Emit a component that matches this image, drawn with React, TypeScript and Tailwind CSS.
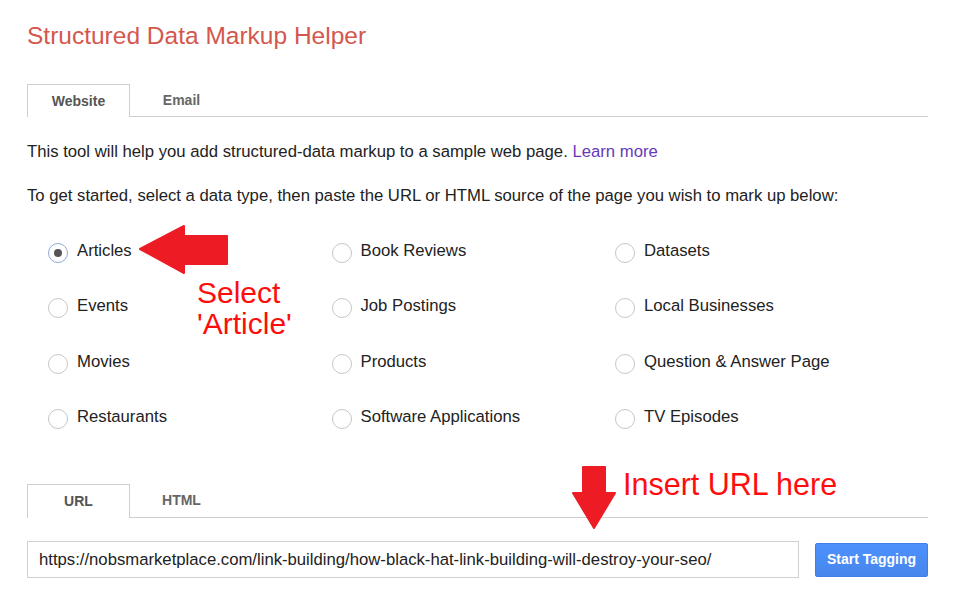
import React from 'react';

const types = [
  'Articles',
  'Book Reviews',
  'Datasets',
  'Events',
  'Job Postings',
  'Local Businesses',
  'Movies',
  'Products',
  'Question & Answer Page',
  'Restaurants',
  'Software Applications',
  'TV Episodes',
];

function Radio({ checked }: { checked?: boolean }) {
  return (
    <span
      className={
        checked
          ? 'mt-[4px] flex h-[20px] w-[20px] shrink-0 items-center justify-center rounded-full border border-[#8fa9d6] bg-white'
          : 'mt-[4px] flex h-[20px] w-[20px] shrink-0 items-center justify-center rounded-full border border-[#c6c6c6] bg-white'
      }
    >
      {checked && <span className="h-[8px] w-[8px] rounded-full bg-[#555]" />}
    </span>
  );
}

function Tabs({ first, second, tall }: { first: string; second: string; tall?: boolean }) {
  return (
    <div className={tall ? 'flex h-[34px] border-b border-[#cfcfcf]' : 'flex h-[33px] border-b border-[#cfcfcf]'}>
      <div
        className={
          tall
            ? '-mb-px flex h-[34px] w-[103px] items-center justify-center border border-b-0 border-[#cfcfcf] bg-white text-[14px] font-bold text-[#555]'
            : '-mb-px flex h-[33px] w-[103px] items-center justify-center border border-b-0 border-[#cfcfcf] bg-white text-[14px] font-bold text-[#555]'
        }
      >
        {first}
      </div>
      <div className="flex w-[103px] items-center justify-center text-[14px] font-bold text-[#666]">{second}</div>
    </div>
  );
}

export default function App() {
  return (
    <div className="relative h-[600px] w-[974px] overflow-hidden bg-white font-['Liberation_Sans',Arial,sans-serif] text-[#222]">
      <div className="w-[928px] pl-[27px] pt-[21px]">
        <h1 className="text-[24.5px] leading-[30px] text-[#d4574d]">Structured Data Markup Helper</h1>

        {/* Website / Email tabs */}
        <div className="mt-[33px]">
          <Tabs first="Website" second="Email" />
        </div>

        <p className="mt-[25px] text-[16.7px] leading-[20px]">
          This tool will help you add structured-data markup to a sample web page.{' '}
          <span className="text-[#6639b7]">Learn more</span>
        </p>
        <p className="mt-[24px] text-[16.7px] leading-[20px]">
          To get started, select a data type, then paste the URL or HTML source of the page you wish to mark up below:
        </p>

        {/* Data types */}
        <div className="ml-[21px] mt-[35px] grid grid-cols-[283.5px_283.5px_auto] gap-y-[35.3px]">
          {types.map((t, i) => (
            <div key={t} className="flex h-[20px] items-center gap-[9px]">
              <Radio checked={i === 0} />
              <span className="text-[16.7px] leading-[20px]">{t}</span>
            </div>
          ))}
        </div>

        {/* URL / HTML tabs */}
        <div className="mt-[57px]">
          <Tabs first="URL" second="HTML" tall />
        </div>

        <div className="mt-[23px] flex items-start">
          <div className="flex h-[37px] w-[772px] items-center border border-[#d0d0d0] px-[11px] text-[16.7px]">
            https://nobsmarketplace.com/link-building/how-black-hat-link-building-will-destroy-your-seo/
          </div>
          <button
            type="button"
            className="ml-[16px] mt-[2px] flex h-[34px] w-[113px] items-center justify-center rounded-[2px] border border-[#3d7fe6] bg-gradient-to-b from-[#4d90fe] to-[#4787ed] text-[14px] font-bold text-white"
          >
            Start Tagging
          </button>
        </div>
      </div>

      {/* annotations */}
      <svg className="absolute left-[138px] top-[224px]" width="92" height="52" viewBox="0 0 92 52">
        <polygon
          points="2,25 46,2 46,12 89,12 89,40 46,40 46,49"
          fill="#ed1c24"
          stroke="#ed1c24"
          strokeWidth="2"
          strokeLinejoin="round"
        />
      </svg>
      <div className="absolute left-[197px] top-[277px] text-[30px] leading-[31px] text-[#ff0d0d]">
        Select
        <br />
        'Article'
      </div>

      <svg className="absolute left-[571px] top-[465px]" width="46" height="66" viewBox="0 0 46 66">
        <polygon
          points="12,2 34,2 34,28 44,28 23,63 2,28 12,28"
          fill="#ed1c24"
          stroke="#ed1c24"
          strokeWidth="2"
          strokeLinejoin="round"
        />
      </svg>
      <div className="absolute left-[623px] top-[468px] text-[30.5px] leading-[32px] text-[#ff0d0d]">Insert URL here</div>
    </div>
  );
}
